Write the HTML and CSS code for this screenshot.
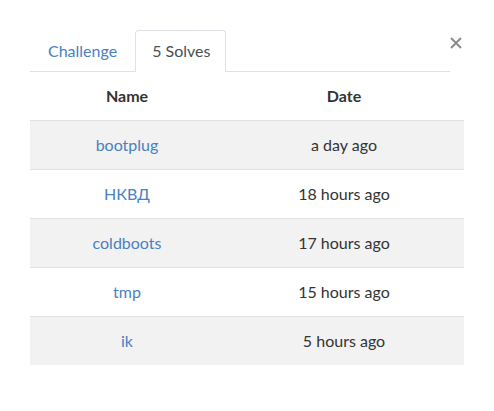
FILE: index.html
```html
<!DOCTYPE html>
<html>
<head>
<meta charset="utf-8">
<link rel="stylesheet" href="styles.css">
</head>
<body>
<div class="modal">
  <button class="close" aria-label="Close">
    <svg width="12" height="12" viewBox="0 0 12 12"><path d="M1 1L11 11M11 1L1 11" stroke="#8a8a8a" stroke-width="2"/></svg>
  </button>
  <div class="tabs">
    <a class="tab">Challenge</a>
    <a class="tab active">5 Solves</a>
  </div>
  <table class="solves">
    <thead>
      <tr><th class="c-name">Name</th><th class="c-date">Date</th></tr>
    </thead>
    <tbody>
      <tr class="odd"><td><a>bootplug</a></td><td>a day ago</td></tr>
      <tr><td><a>НКВД</a></td><td>18 hours ago</td></tr>
      <tr class="odd"><td><a>coldboots</a></td><td>17 hours ago</td></tr>
      <tr><td><a>tmp</a></td><td>15 hours ago</td></tr>
      <tr class="odd"><td><a>ik</a></td><td>5 hours ago</td></tr>
    </tbody>
  </table>
</div>
</body>
</html>
```
FILE: styles.css
```css
html, body { margin: 0; padding: 0; background: #fff; }
body { font-family: Lato, "Open Sans", sans-serif; font-size: 16px; color: #333; }
.modal { position: relative; padding: 30px 30px 0 30px; }
.close { position: absolute; top: 37px; left: 450px; width: 12px; height: 12px; padding: 0; border: 0; background: none; display: flex; }
.tabs { display: flex; width: 420px; border-bottom: 1px solid #dee2e6; height: 41px; box-sizing: content-box; }
.tab { display: flex; align-items: center; padding: 0 17px 2px 17px; color: #4a7fc1; border: 1px solid transparent; border-bottom: 0; border-radius: 4px 4px 0 0; margin-bottom: -1px; box-sizing: border-box; height: 42px; }
.tab.active { color: #495057; border-color: #dee2e6; background: #fff; padding: 0 15px 2px 16px; }
.solves { border-collapse: collapse; width: 434px; table-layout: fixed; }
.c-name { width: 194px; }
.c-date { width: 240px; }
th, td { text-align: center; padding: 0 0 1px 0; vertical-align: middle; }
th { font-weight: 700; color: #333; height: 47px; }
td { border-top: 1px solid #dee2e6; height: 47px; }
tr.odd td { background: #f2f2f2; }
td a { color: #4a7fc1; }
```
